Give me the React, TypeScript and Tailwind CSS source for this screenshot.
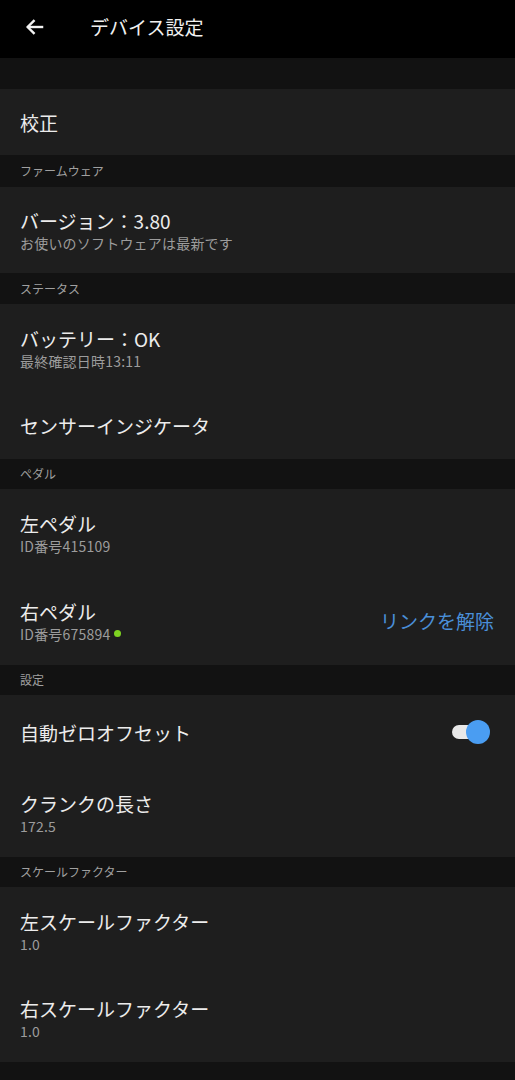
import React from "react";

const font = { fontFamily: '"Noto Sans CJK JP", "Noto Sans", sans-serif' };

function SectionHeader({ label, h }: { label: string; h: string }) {
  return (
    <div className={`flex items-center bg-[#121212] pl-[20px] text-[12px] text-[#a0a0a0] ${h}`}>
      {label}
    </div>
  );
}

function Row({
  title,
  sub,
  h,
  right,
  dot,
}: {
  title: string;
  sub?: string;
  h: string;
  right?: React.ReactNode;
  dot?: boolean;
}) {
  return (
    <div className={`flex items-center justify-between bg-[#1e1e1e] pl-[20px] pr-[21px] ${h}`}>
      <div className="flex flex-col">
        <div className="text-[19px] leading-[25px] text-[#ececec]">{title}</div>
        {sub && (
          <div className="flex items-center text-[14px] leading-[20px] tracking-[0.2px] text-[#9c9c9c]">
            {sub}
            {dot && <span className="ml-[4px] inline-block h-[7px] w-[7px] rounded-full bg-[#7ed321]" />}
          </div>
        )}
      </div>
      {right}
    </div>
  );
}

export default function App() {
  return (
    <div className="min-h-[1080px] w-[515px] bg-[#121212]" style={font}>
      <div className="flex h-[58px] items-center bg-black">
        <svg className="ml-[24px] -mt-[4px]" width="22" height="22" viewBox="0 0 24 24" fill="none" stroke="#f2f2f2" strokeWidth="2.6" strokeLinecap="butt" strokeLinejoin="miter">
          <path d="M21 12H4" />
          <path d="M11.5 4.5L4 12l7.5 7.5" />
        </svg>
        <div className="-mt-[4px] ml-[44px] text-[19px] text-[#f0f0f0]">デバイス設定</div>
      </div>
      <div className="h-[31px] bg-[#121212]" />
      <Row title="校正" h="h-[66px]" />
      <SectionHeader label="ファームウェア" h="h-[32px]" />
      <Row title="バージョン：3.80" sub="お使いのソフトウェアは最新です" h="h-[86px]" />
      <SectionHeader label="ステータス" h="h-[31px]" />
      <Row title="バッテリー：OK" sub="最終確認日時13:11" h="h-[88px]" />
      <Row title="センサーインジケータ" h="h-[67px]" />
      <SectionHeader label="ペダル" h="h-[30px]" />
      <Row title="左ペダル" sub="ID番号415109" h="h-[88px]" />
      <Row
        title="右ペダル"
        sub="ID番号675894"
        dot
        h="h-[88px]"
        right={<div className="text-[19px] text-[#4a8fd8]">リンクを解除</div>}
      />
      <SectionHeader label="設定" h="h-[30px]" />
      <Row
        title="自動ゼロオフセット"
        h="h-[74px]"
        right={
          <div className="relative mr-[4px] h-[24px] w-[38px]">
            <div className="absolute left-0 top-[5px] h-[14px] w-[30px] rounded-full bg-[#e8e8e8]" />
            <div className="absolute right-0 top-0 h-[24px] w-[24px] rounded-full bg-[#4a9df2]" />
          </div>
        }
      />
      <Row title="クランクの長さ" sub="172.5" h="h-[88px]" />
      <SectionHeader label="スケールファクター" h="h-[30px]" />
      <Row title="左スケールファクター" sub="1.0" h="h-[88px]" />
      <Row title="右スケールファクター" sub="1.0" h="h-[87px]" />
    </div>
  );
}
